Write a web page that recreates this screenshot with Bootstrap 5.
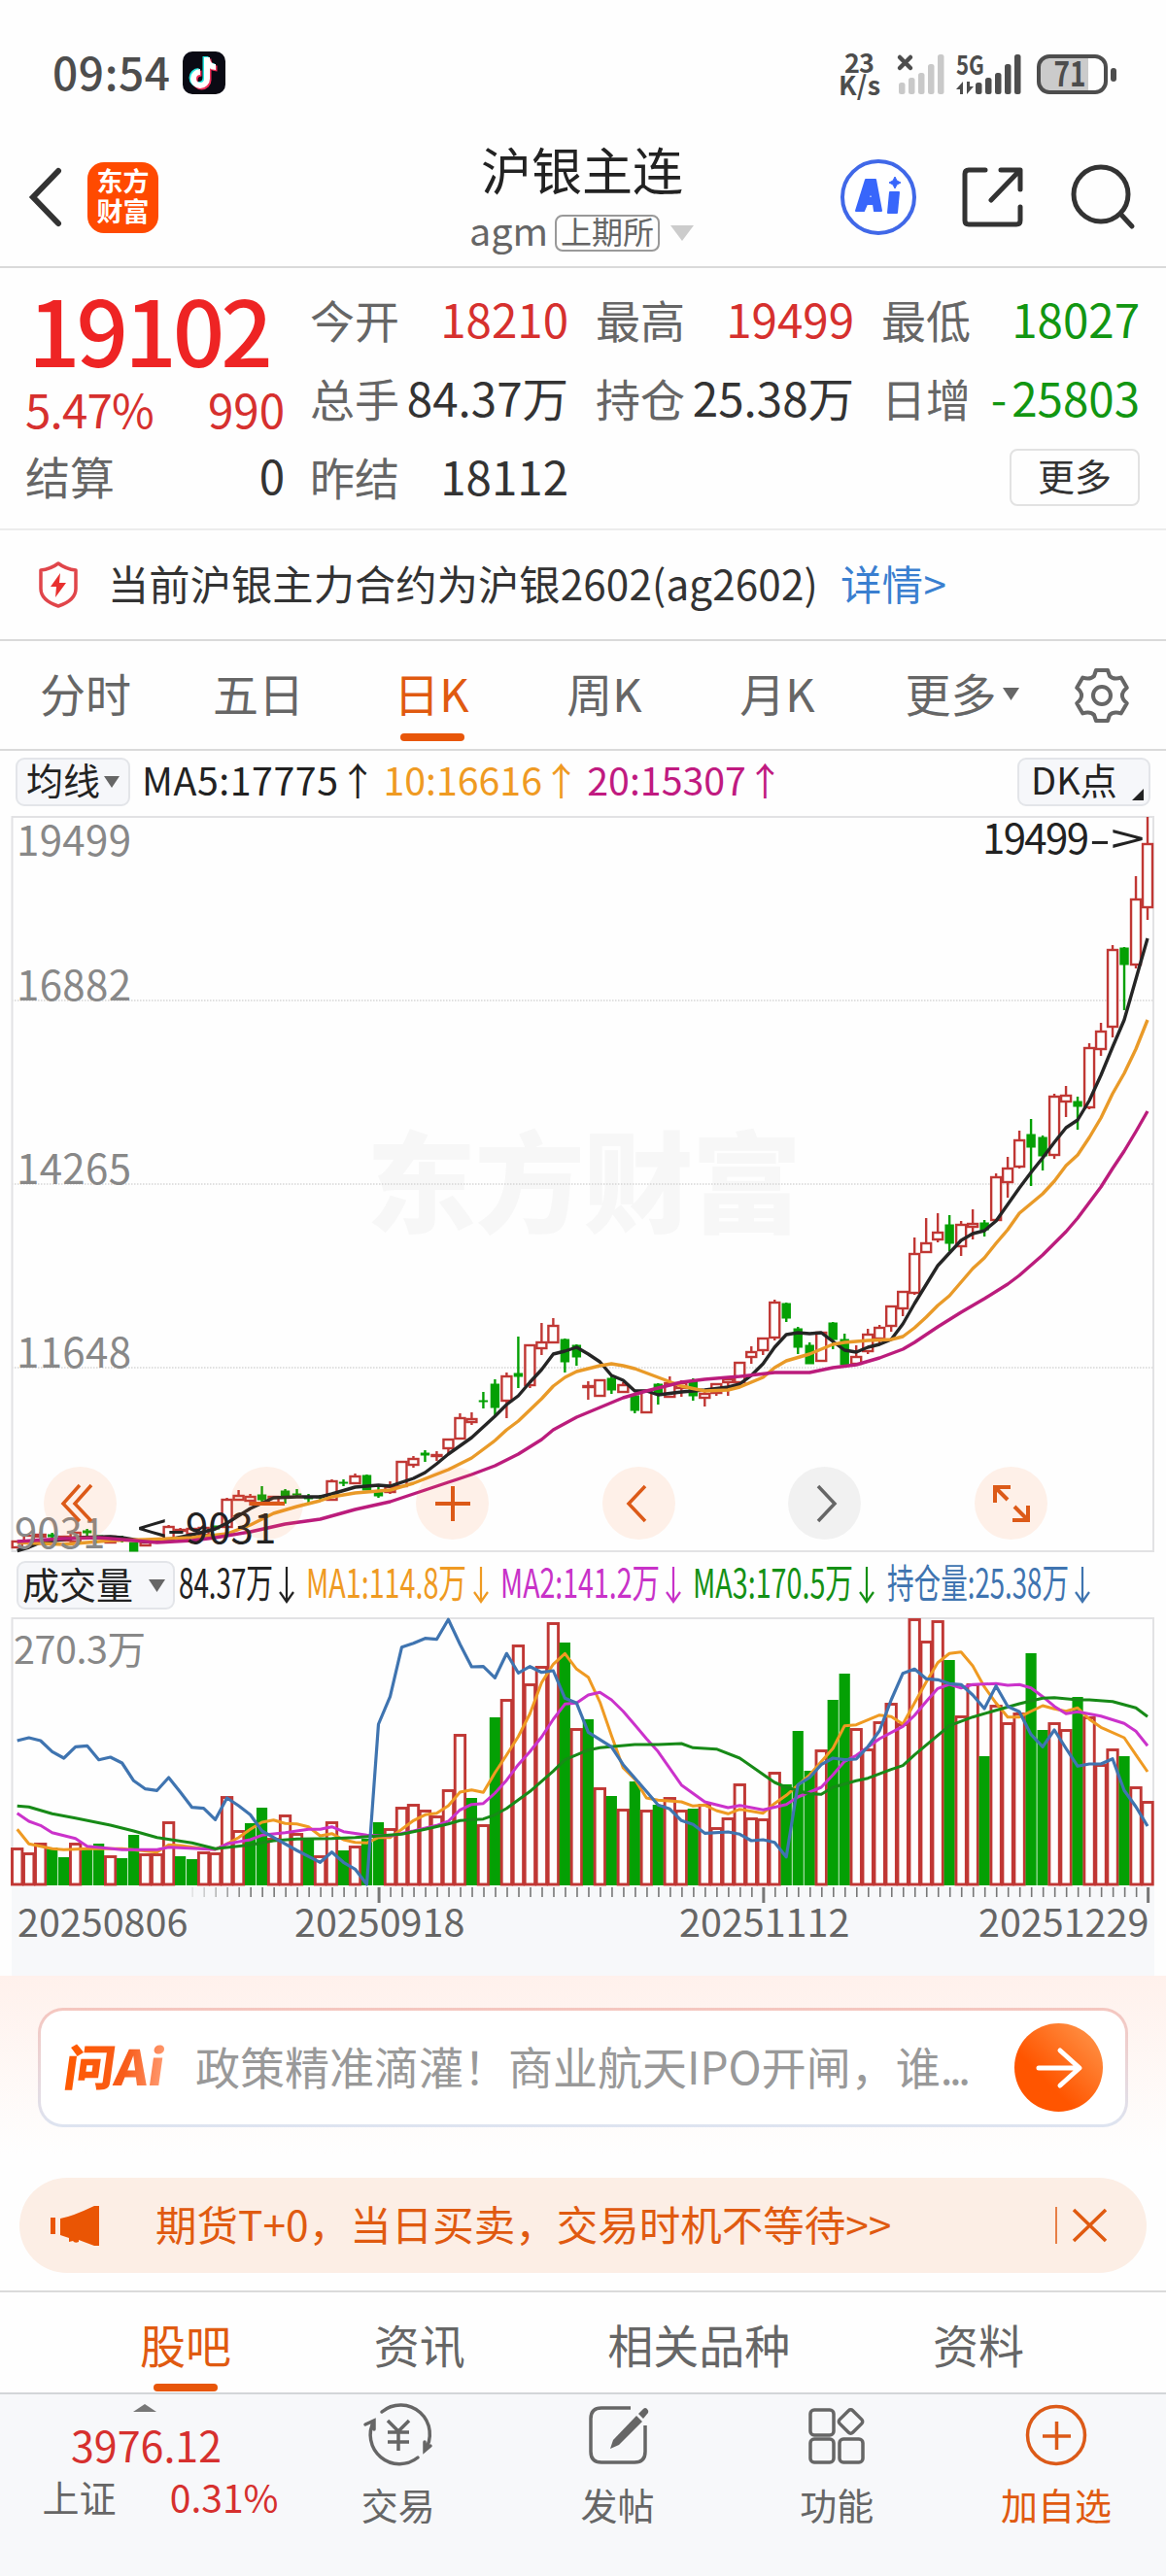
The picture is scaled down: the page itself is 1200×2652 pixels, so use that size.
<!DOCTYPE html>
<html lang="zh-CN">
<head>
<meta charset="utf-8">
<meta name="viewport" content="width=device-width, initial-scale=1">
<title>沪银主连</title>
<link rel="stylesheet" href="https://cdn.jsdelivr.net/npm/bootstrap@5.3.0/dist/css/bootstrap.min.css">
<style>
  body{width:1200px;height:2652px;overflow:hidden;background:#fefefe;color:#333;font-family:"Noto Sans CJK SC",sans-serif;font-size:46px;line-height:1}
  svg{display:block;flex-shrink:0;overflow:visible}
  svg text{font-family:"Noto Sans CJK SC",sans-serif}
  .txt-grey{color:#666}.txt-red{color:#d6302e}.txt-green{color:#129612}.txt-blue{color:#3a7fd0}.txt-orange{color:#e05a10}
  .rule-b{border-bottom:2px solid #dadada}
  .status-bar{height:131px;padding:0 50px 21px 54px;color:#4d4d4d}
  .clock{font-size:46px;font-weight:500;letter-spacing:.6px;line-height:50px;padding-bottom:4px;width:118px}
  .top-bar{height:145px;padding:0 32px 0 30px}
  .top-side{width:370px;height:144px}
  .top-title{font-size:52px;line-height:60px;color:#222;margin-bottom:17px}
  .sub-line{height:38px;font-size:39.5px;color:#666}
  .exch{border:2px solid #999;border-radius:8px;font-size:32px;height:38px;width:108px;line-height:29px;margin-left:7px}
  .app-logo{width:73px;height:73px;border-radius:17px;background:#ff4a00;color:#fff;font-weight:700;font-size:27px;line-height:31px;padding-top:3px;margin-left:27px}
  .quote{height:270px;padding:11px 27px 0 26px;border-bottom:2px solid #ececec}
  .q-left{width:267px}
  .q-price{font-size:94px;height:104px;line-height:100px;color:#ee2424;font-weight:500;letter-spacing:-4px;padding-left:3px}
  .q-row{height:81px}
  .q-cell{width:266px}
  .q-val{font-size:47.5px}
  .dash{letter-spacing:5px}
  .q-more{width:134px;height:59px;border:2px solid #e2e2e2;border-radius:8px;font-size:38px;padding-bottom:4px;margin-top:3px}
  .notice{height:114px;font-size:42.2px;padding:2px 38px 2px}
  .k-tabs{height:113px;font-size:47px;color:#666}
  .k-tab{width:178px;height:100%;padding:0 2px 6px 0;position:relative}
  .bar-under{position:absolute;bottom:8px;left:50%;width:66px;height:8px;margin-left:-33px;border-radius:4px;background:#e8560a}
  .ma-row{height:63px;padding:0 16px;font-size:39.3px;line-height:50px}
  .chip{background:#f6f7fa;border:2px solid #e3e5e9;border-radius:9px;height:50px;font-size:38px;color:#222;line-height:40px}
  .ma-txt{margin-top:-5px;white-space:pre}
  .vol-row{height:56px;padding-left:17px}
  .chart-wrap{position:relative}
  .ctl{position:absolute;top:674px;width:75px;height:75px;background:rgba(255,120,40,.1)}
  .ctl-off{background:rgba(0,0,0,.05)}
  .ask{height:208px;padding:33px 39px 0;background:linear-gradient(#fff1ec,#fefefe 88%)}
  .ask-box{height:123px;border:3px solid transparent;border-radius:26px;background:linear-gradient(#fff,#fff) padding-box,linear-gradient(#f5c6bf,#dde4f1) border-box;padding:0 24px}
  .ask-text{font-size:46px;color:#999;margin-left:29px;padding-bottom:5px;white-space:nowrap}
  .ask-dots{letter-spacing:-3.5px}
  .promo{height:98px;margin:0 20px 18px;border-radius:49px;background:#fceee5;font-size:42.5px;padding:0 39px 0 32px}
  .b-tabs{height:107px;padding:0 146px 0 144px;font-size:47px;color:#666;border-top:2px solid #dadada;border-bottom:2px solid #d3d5d8}
  .b-tab{height:100%;position:relative;padding-top:29px}
  .b-tabs .bar-under{bottom:1px}
  .foot{height:187px;background:#f7f8fa;font-size:38px;color:#666}
  .foot-idx{width:297px}
</style>
<script src="https://cdn.jsdelivr.net/npm/bootstrap@5.3.0/dist/js/bootstrap.bundle.min.js"></script>
</head>
<body>

<div class="status-bar d-flex align-items-end justify-content-between">
  <div class="d-flex align-items-center mb-2">
    <div class="clock">09:54</div>
    <svg class="ms-3" width="44" height="44" viewBox="0 0 44 44"><rect width="44" height="44" rx="10" fill="#0a0a14"/>
      <g fill="none" stroke-width="6"><path d="M24.500 6v22a7 7 0 1 1-7-7M24.500 8c1 5 4 8 9 8" stroke="#25e5e0" transform="translate(-1 -1)"/><path d="M24.500 6v22a7 7 0 1 1-7-7M24.500 8c1 5 4 8 9 8" stroke="#f0305a" transform="translate(2 1.500)"/><path d="M25 6v22a7 7 0 1 1-7-7M25 8c1 5 4 8 9 8" stroke="#fff"/></g></svg>
  </div>
  <svg class="mb-2" width="288" height="52" viewBox="862 50 288 52" fill="#4d4d4d">
    <g font-weight="700" font-size="27"><text x="869" y="75" textLength="31">23</text><text x="863" y="98" textLength="43">K/s</text></g>
    <path d="M926 59l11 11m0-11l-11 11" stroke="#4d4d4d" stroke-width="4.500" stroke-linecap="round"/>
    <g fill="#c9c9c9"><rect x="925" y="85" width="6.500" height="12" rx="2.500"/><rect x="935" y="80" width="6.500" height="17" rx="2.500"/><rect x="945" y="75" width="6.500" height="22" rx="2.500"/><rect x="955" y="66" width="6.500" height="31" rx="2.500"/><rect x="965" y="56" width="6.500" height="41" rx="2.500"/></g>
    <text x="984" y="77" font-weight="700" font-size="27" textLength="29" lengthAdjust="spacingAndGlyphs">5G</text>
    <path d="M984 92l7-8v13h-3v-5zM1002 89l-7 8v-13h3v5z"/>
    <rect x="1004" y="85" width="6.500" height="12" rx="2.500"/><rect x="1014" y="80" width="6.500" height="17" rx="2.500"/><rect x="1024" y="75" width="6.500" height="22" rx="2.500"/><rect x="1034" y="66" width="6.500" height="31" rx="2.500"/><rect x="1044" y="56" width="6.500" height="41" rx="2.500"/>
    <path d="M1120 58H1080q-11 0-11 11v15q0 11 11 11h40z" fill="#cbcbcb"/>
    <rect x="1069" y="58" width="69" height="37" rx="11" fill="none" stroke="#4d4d4d" stroke-width="4"/><rect x="1143" y="70" width="6" height="14" rx="3"/>
    <text x="1101" y="89" font-size="35" font-weight="700" text-anchor="middle" textLength="33" lengthAdjust="spacingAndGlyphs">71</text>
  </svg>
</div>

<header class="top-bar d-flex justify-content-between rule-b">
  <div class="top-side d-flex align-items-center">
    <svg width="33" height="64" viewBox="0 0 33 64"><path d="M30 5L4 32l26 27" fill="none" stroke="#333" stroke-width="6" stroke-linecap="round"/></svg>
    <div class="app-logo text-center">东方<br>财富</div>
  </div>
  <div class="d-flex flex-column align-items-center" style="padding-top:13px">
    <div class="top-title">沪银主连</div>
    <div class="sub-line d-flex align-items-center"><span class="pb-2">agm</span><span class="exch text-center">上期所</span>
      <svg style="margin-left:10px" width="26" height="16"><path d="M1 0h24L13 16z" fill="#ccc"/></svg></div>
  </div>
  <div class="top-side d-flex align-items-center justify-content-end">
    <svg width="78" height="78" viewBox="0 0 78 78"><circle cx="39" cy="39" r="37" fill="#fff" stroke="#4068e8" stroke-width="4"/><g fill="#3866fb" stroke="#3866fb" stroke-width="2" stroke-linejoin="round"><path fill-rule="evenodd" d="M26 21h10l6 32h-7l-1-7h-7l-3 7h-8zM31 33l-2 7h4z"/><path d="M51 34h9l-2 21h-9z"/><path d="M56 18l2 4 4 2-4 2-2 4-2-4-4-2 4-2z" stroke-width="1"/></g></svg>
    <svg style="margin-left:46px" width="65" height="64" viewBox="0 0 65 64" fill="none" stroke="#333" stroke-width="5" stroke-linecap="round" stroke-linejoin="round"><path d="M25 4H8q-4 0-4 4v48q0 4 4 4h49q4 0 4-4V42M41 4h20v20M60 5L31 35"/></svg>
    <svg style="margin-left:48px" width="66" height="66" viewBox="0 0 66 66" fill="none" stroke="#333" stroke-width="5" stroke-linecap="round"><circle cx="31" cy="30" r="28"/><path d="M51 50l12 13"/></svg>
  </div>
</header>

<section class="quote d-flex justify-content-between">
  <div class="q-left">
    <div class="q-price">19102</div>
    <div class="d-flex justify-content-between align-items-center txt-red q-val" style="height:60px"><span style="letter-spacing:-.8px">5.47%</span><span>990</span></div>
    <div class="d-flex justify-content-between align-items-center" style="height:76px"><span class="txt-grey">结算</span><span class="q-val">0</span></div>
  </div>
  <div style="width:854px">
    <div class="q-row d-flex justify-content-between align-items-center">
      <div class="q-cell d-flex justify-content-between align-items-center"><span class="txt-grey">今开</span><span class="q-val txt-red">18210</span></div>
      <div class="q-cell d-flex justify-content-between align-items-center"><span class="txt-grey">最高</span><span class="q-val txt-red">19499</span></div>
      <div class="q-cell d-flex justify-content-between align-items-center"><span class="txt-grey">最低</span><span class="q-val txt-green">18027</span></div>
    </div>
    <div class="q-row d-flex justify-content-between align-items-center">
      <div class="q-cell d-flex justify-content-between align-items-center"><span class="txt-grey">总手</span><span class="q-val">84.37万</span></div>
      <div class="q-cell d-flex justify-content-between align-items-center"><span class="txt-grey">持仓</span><span class="q-val">25.38万</span></div>
      <div class="q-cell d-flex justify-content-between align-items-center"><span class="txt-grey">日增</span><span class="q-val txt-green"><span class="dash">-</span>25803</span></div>
    </div>
    <div class="q-row d-flex justify-content-between align-items-center">
      <div class="q-cell d-flex justify-content-between align-items-center"><span class="txt-grey">昨结</span><span class="q-val">18112</span></div>
      <div class="q-more d-flex align-items-center justify-content-center">更多</div>
    </div>
  </div>
</section>

<section class="notice d-flex align-items-center rule-b">
  <svg width="44" height="50" viewBox="0 0 44 50" style="margin-right:29px"><path d="M22 3q8 6 18 7v19q0 12-18 18Q4 41 4 29V10q10-1 18-7z" fill="none" stroke="#e0454a" stroke-width="3.500" stroke-linejoin="round"/><path d="M24 13l-10 14h6l-1 11 11-15h-7z" fill="#e8302f"/></svg>
  <span class="pb-1" style="letter-spacing:.15px">当前沪银主力合约为沪银2602(ag2602)</span><span class="pb-1 txt-blue" style="margin-left:23px;letter-spacing:.6px">详情&gt;</span>
</section>

<nav class="k-tabs d-flex align-items-center rule-b">
  <div class="k-tab d-flex align-items-center justify-content-center">分时</div>
  <div class="k-tab d-flex align-items-center justify-content-center">五日</div>
  <div class="k-tab d-flex align-items-center justify-content-center txt-orange">日K<span class="bar-under"></span></div>
  <div class="k-tab d-flex align-items-center justify-content-center">周K</div>
  <div class="k-tab d-flex align-items-center justify-content-center">月K</div>
  <div class="k-tab d-flex align-items-center justify-content-center ps-4">更多<svg style="margin:3px 0 0 6px" width="17" height="13"><path d="M0 0h17L8.500 13z" fill="#666"/></svg></div>
  <svg style="margin-left:36px" width="60" height="60" viewBox="-30 -30 60 60" fill="none" stroke="#666" stroke-width="4" stroke-linejoin="round"><path d="M-6-26H6L8-20Q12-16 19.700-18.400L25.800-8Q16 0 25.800 8L19.700 18.400Q12 16 8 20L6 26H-6L-8 20Q-12 16-19.700 18.400L-25.800 8Q-16 0-25.800-8L-19.700-18.400Q-12-16-8-20z"/><circle r="9"/></svg>
</nav>

<div class="ma-row d-flex align-items-center justify-content-between">
  <div class="d-flex align-items-center">
    <div class="chip d-flex align-items-center" style="width:118px;padding:0 8px 0 9px"><span style="margin-top:-5px">均线</span><svg class="ms-1" width="16" height="12"><path d="M0 0h16L8 12z" fill="#666"/></svg></div>
    <span class="ma-txt" style="margin-left:12px;color:#222;letter-spacing:.55px">MA5:17775↑</span>
    <span class="ma-txt" style="margin-left:6px;color:#ef9a22">10:16616↑</span>
    <span class="ma-txt" style="margin-left:7px;color:#c01a80">20:15307↑</span>
  </div>
  <div class="chip d-flex justify-content-between align-items-center" style="width:137px;padding:0 5px 0 12px"><span style="margin-top:-5px">DK点</span><svg width="12" height="12" class="align-self-end mb-1"><path d="M12 0v12H0z" fill="#222"/></svg></div>
</div>

<div class="chart-wrap">
  <svg id="kline" width="1200" height="768" viewBox="0 836 1200 768"></svg>
  <button class="ctl btn p-0 border-0 rounded-circle" style="left:45px"><svg width="75" height="75" viewBox="0 0 75 75" fill="none" stroke="#dc5a18" stroke-width="3.500"><path d="M37 19L20 38l17 18M49 19L32 38l17 18"/></svg></button>
  <button class="ctl btn p-0 border-0 rounded-circle" style="left:237px"><svg width="75" height="75" viewBox="0 0 75 75"><path d="M20 38h36" stroke="#dc5a18" stroke-width="4"/></svg></button>
  <button class="ctl btn p-0 border-0 rounded-circle" style="left:428px"><svg width="75" height="75" viewBox="0 0 75 75"><path d="M20 38h36M38 20v36" stroke="#dc5a18" stroke-width="4"/></svg></button>
  <button class="ctl btn p-0 border-0 rounded-circle" style="left:620px"><svg width="75" height="75" viewBox="0 0 75 75"><path d="M44 20L27 38l17 18" fill="none" stroke="#dc5a18" stroke-width="3.500"/></svg></button>
  <button class="ctl ctl-off btn p-0 border-0 rounded-circle" style="left:811px"><svg width="75" height="75" viewBox="0 0 75 75"><path d="M31 20l17 18-17 18" fill="none" stroke="#666" stroke-width="3.500"/></svg></button>
  <button class="ctl btn p-0 border-0 rounded-circle" style="left:1003px"><svg width="75" height="75" viewBox="0 0 75 75"><path d="M21 37V21h16M22 22l12 12M55 40v15H39M54 54L41 41" fill="none" stroke="#dc5a18" stroke-width="4"/></svg></button>
</div>

<div class="vol-row d-flex align-items-center">
  <div class="chip d-flex align-items-center justify-content-between" style="width:163px;padding:0 8px 0 4px"><span style="margin-top:-5px">成交量</span><svg width="17" height="13"><path d="M0 0h17L8.500 13z" fill="#666"/></svg></div>
  <svg id="vlegend" width="1020" height="56" viewBox="180 1604 1020 56"></svg>
</div>
<svg id="volume" width="1200" height="374" viewBox="0 1660 1200 374"></svg>

<section class="ask">
  <div class="ask-box d-flex align-items-center">
    <svg width="106" height="50" viewBox="0 0 106 50"><defs><linearGradient id="lg"><stop offset="0" stop-color="#ff5a00"/><stop offset=".6" stop-color="#f85c1a"/><stop offset="1" stop-color="#ff9a70"/></linearGradient></defs>
      <g transform="skewX(-8)"><text x="4" y="43" font-size="50" font-weight="900" fill="url(#lg)" textLength="103" lengthAdjust="spacingAndGlyphs">问Ai</text></g></svg>
    <span class="ask-text">政策精准滴灌！商业航天IPO开闸，谁<span class="ask-dots">...</span></span>
    <svg class="ms-auto" width="91" height="91" viewBox="0 0 91 91"><defs><linearGradient id="og" x1="0" y1="1" x2="1" y2="0"><stop offset=".35" stop-color="#ff5500"/><stop offset="1" stop-color="#ff9a50"/></linearGradient></defs><circle cx="46.500" cy="45.500" r="45.500" fill="url(#og)"/><path d="M26 46h41M48 28l20 18-20 18" fill="none" stroke="#fff" stroke-width="5" stroke-linecap="round" stroke-linejoin="round"/></svg>
  </div>
</section>

<div class="promo d-flex align-items-center txt-orange">
  <svg width="50" height="42" viewBox="0 0 50 42" fill="#ea5504"><path d="M0 13h5v17H0zM10 14q12-2 35-13h5v41h-5l-16-6v2q-4 2-6-1l-4 1v-4l-9-3z"/></svg>
  <span style="margin-left:58px;padding-bottom:4px">期货T+0，当日买卖，交易时机不等待&gt;&gt;</span>
  <svg class="ms-auto" width="56" height="40" viewBox="0 0 56 40" fill="none" stroke="#e05a10"><path d="M2 1v38" stroke-width="1.500"/><path d="M20 4l33 32M53 4L20 36" stroke-width="3.500"/></svg>
</div>

<nav class="b-tabs d-flex justify-content-between">
  <div class="b-tab txt-orange">股吧<span class="bar-under"></span></div>
  <div class="b-tab">资讯</div>
  <div class="b-tab">相关品种</div>
  <div class="b-tab">资料</div>
</nav>

<footer class="foot d-flex">
  <div class="foot-idx d-flex flex-column align-items-center">
    <svg style="margin-top:10px" width="24" height="8"><path d="M0 8L12 0l12 8z" fill="#777"/></svg>
    <div class="txt-red" style="font-size:43px;line-height:46px;margin-top:10px;padding-left:4px">3976.12</div>
    <div class="d-flex justify-content-between align-items-center" style="width:243px;margin:8px 0 0 33px;height:46px"><span>上证</span><span class="txt-red" style="font-size:39px">0.31%</span></div>
  </div>
  <div class="flex-fill d-flex flex-column align-items-center" style="width:0">
    <svg style="margin-top:9px" width="74" height="66" viewBox="-37 -33 74 66" fill="none" stroke="#666" stroke-width="3.500" stroke-linecap="round"><path d="M-17-24A30 30 0 0 1 27 16M33 11l-6 5 0-9M20 23A30 30 0 0 1-25-15M-34-11l9-4 0 9"/><path d="M-11-15L0-4l11-11M0-4v20M-11-3h22M-11 7h22" stroke-linecap="butt"/></svg>
    <span style="margin-top:19px">交易</span></div>
  <div class="flex-fill d-flex flex-column align-items-center" style="width:0">
    <svg style="margin-top:9px" width="66" height="66" viewBox="-33 -33 66 66" fill="none" stroke="#666" stroke-width="3.500"><path d="M13-28h-30q-11 0-11 11V17q0 11 11 11H17q11 0 11-11V-10"/><path d="M-8 14l3-9L19-20l6 6L1 10z" fill="#666" stroke="none"/><path d="M21-22l5-5q2-2 4 0t1 4l-5 6z" fill="#666" stroke="none"/></svg>
    <span style="margin-top:19px">发帖</span></div>
  <div class="flex-fill d-flex flex-column align-items-center" style="width:0">
    <svg style="margin-top:9px" width="66" height="66" viewBox="-33 -33 66 66" fill="none" stroke="#666" stroke-width="3.500" stroke-linejoin="round"><rect x="-27" y="-26" width="24" height="26" rx="4"/><rect x="-27" y="4" width="24" height="24" rx="4"/><rect x="3" y="4" width="24" height="24" rx="4"/><rect x="5" y="-23.500" width="19" height="19" rx="3" transform="rotate(45 14.500 -14)"/></svg>
    <span style="margin-top:19px">功能</span></div>
  <div class="flex-fill d-flex flex-column align-items-center txt-orange" style="width:0">
    <svg style="margin-top:9px" width="66" height="66" viewBox="-33 -33 66 66" fill="none" stroke="#dc5a18" stroke-width="3.500"><circle r="29.500"/><path d="M-14 1h29M.500-14v29"/></svg>
    <span style="margin-top:19px">加自选</span></div>
</footer>

<script>
const X0 = 17.7, STEP = 11.993, RED = '#c03734', GREEN = '#04a004';
const cx = i => X0 + STEP * i;
const line = (pts, color, w, f) => `<polyline fill="none" stroke="${color}" stroke-width="${w}" stroke-linejoin="round" points="${pts.trim().split(/\s+/).map(p => { const [i, y] = p.split(':').map(Number); return cx(i).toFixed(1) + ',' + f(y).toFixed(1); }).join(' ')}"/>`;

/* candles: direction, body top, body bottom, high, low (chart pixels) */
const candles = `r1587,1593 r1581,1587 r1580,1582,1577,1585 g1580,1582,1578,1586 r1582,1586 r1578,1587 g1576,1578,1574,1582 g1581,1584 r1582,1588 g1583,1584,1581,1588
g1588,1597 r1588,1591 g1586,1588 r1572,1585,1570,1585 r1575,1576,1573,1578 r1574,1579 r1573,1580,1571,1580 g1571,1574 r1544,1572,1542,1572 r1540,1544,1534,1544
r1541,1545,1538,1550 g1539,1544,1530,1547 r1541,1547,1541,1549 g1535,1541,1533,1548 g1538,1539,1533,1540 g1542,1543,1538,1547 g1541,1542,1539,1544 r1525,1544,1523,1544 g1526,1527,1523,1530 r1520,1527,1517,1528
g1519,1534,1518,1534 g1535,1540,1528,1542 r1531,1536,1525,1538 r1505,1530,1504,1530 r1502,1508,1499,1511 g1496,1498,1493,1505 r1498,1499,1494,1504 r1482,1491,1482,1496 r1460,1481,1455,1481 r1461,1464,1454,1467
g1442,1443,1433,1450 g1425,1449,1420,1457 r1417,1442,1413,1460 g1414,1417,1376,1429 r1385,1426,1385,1429 r1382,1388,1362,1395 r1365,1382,1357,1382 g1379,1402,1378,1413 g1385,1397,1384,1406 r1427,1428,1422,1441
r1421,1437 g1419,1431,1415,1435 r1426,1433,1423,1433 g1437,1452,1436,1455 r1432,1454 g1425,1435,1424,1446 r1424,1438,1417,1438 r1424,1429,1421,1438 g1422,1437,1419,1442 r1435,1439,1433,1448
r1425,1434,1424,1437 r1420,1423,1419,1437 r1403,1423 r1392,1397,1386,1404 r1378,1390,1378,1395 r1341,1377,1338,1380 g1342,1357,1341,1361 g1368,1387,1366,1394 g1385,1404,1382,1404 r1372,1401
g1362,1379,1361,1389 g1379,1405,1373,1405 r1397,1404,1385,1404 r1374,1391,1368,1394 r1367,1378,1364,1383 r1345,1365,1345,1371 r1330,1347,1329,1355 r1291,1331,1274,1333 r1280,1289,1254,1289 r1269,1276,1249,1279
g1261,1280,1251,1288 r1261,1283,1257,1293 r1260,1263,1245,1276 g1259,1266,1256,1273 r1212,1256,1208,1256 r1203,1217,1191,1233 r1174,1201,1164,1203 g1168,1181,1152,1221 g1171,1190,1169,1205 r1129,1189,1126,1193
r1128,1134,1118,1150 g1134,1139,1129,1163 r1079,1140,1074,1142 r1062,1080,1053,1087 r978,1057,973,1068 g976,993,975,1040 r926,993,902,997 r869,934,841,947`.split(/\s+/);

const ma5 = `0:1596.5 1:1593 2:1588 5:1583 8:1582 9:1583 11:1587 13:1585 15:1580 17:1574 18:1568 20:1553 22:1542 24:1541 26:1541 27:1538 29:1531 31:1529 32:1530 34:1522 35:1516 36:1507 37:1497 39:1480 41:1458 42:1446 43:1437 44:1423 45:1410 46:1394 47:1391 48:1387 49:1394 50:1402 51:1416 52:1421 53:1432 54:1432 55:1436 57:1433 59:1431 61:1428 62:1425 63:1416 64:1404 65:1387 66:1374 67:1372 68:1373 69:1372 70:1381 71:1390 72:1392 73:1387 74:1384 75:1379 76:1363 77:1342 79:1303 81:1277 82:1270 83:1267 84:1257 85:1240 86:1223 87:1207 88:1192 89:1176 90:1161 91:1153 92:1133 93:1107 94:1078 95:1050 96:1008 97:966`;
const ma10 = `0:1588 4:1590 8:1586 11:1585 15:1583 18:1579 20:1570 22:1558 24:1551 26:1545 27:1541 29:1537 32:1534 34:1527 37:1513 39:1501 41:1483 42:1472 43:1463 45:1440 46:1427 47:1418 48:1412 49:1409 50:1406 51:1404 52:1406 53:1409 55:1418 57:1427 59:1432 61:1431 62:1428 64:1418 65:1408 66:1401 68:1394 70:1384 71:1382 73:1380 75:1379 76:1376 77:1367 78:1356 79:1344 80:1334 82:1306 83:1295 84:1280 85:1266 86:1249 87:1239 88:1229 89:1216 90:1200 91:1189 92:1171 93:1151 94:1126 95:1105 96:1080 97:1050`;
const ma20 = `0:1587 4:1584 7:1583 9:1585 12:1588 15:1586 17:1583 20:1577 23:1569 26:1564 29:1554 32:1546 35:1534 37:1526 39:1518 41:1509 43:1497 45:1482 46:1472 48:1459 50:1449 52:1439 54:1432 57:1423 59:1420 62:1417 65:1413 68:1413 70:1408 72:1405 74:1398 76:1389 77:1382 79:1366 81:1351 83:1337 85:1322 86:1313 88:1292 90:1268 91:1254 93:1222 94:1203 95:1185 96:1165 97:1144`;

let k = `<text x="377" y="1260" font-size="113" font-weight="900" fill="#f7f7f7" textLength="448">东方财富</text>
<g stroke="#d6d6d6" stroke-width="1.3" stroke-dasharray="1.5 1.5"><path d="M12 1030H1187M12 1219H1187M12 1408H1187"/></g>
<rect x="12.500" y="841" width="1174.500" height="756" fill="none" stroke="#e2e2e4" stroke-width="2"/>`;
candles.forEach((c, i) => {
  const up = c[0] === 'r', [t, b, h = t, l = b] = c.slice(1).split(',').map(Number), x = cx(i), col = up ? RED : GREEN;
  k += `<path d="M${x} ${h}V${t}M${x} ${b}V${l}" stroke="${col}" stroke-width="2.400"/>`;
  k += up ? `<rect x="${x - 5}" y="${t}" width="10" height="${b - t}" fill="#fefefe" stroke="${RED}" stroke-width="2.400"/>`
          : `<rect x="${x - 4.7}" y="${t - .5}" width="9.400" height="${b - t + 1}" fill="${GREEN}"/>`;
});
const same = y => y;
k += line(ma5, '#252525', 3.4, same) + line(ma10, '#e99a28', 3.4, same) + line(ma20, '#bb1c7c', 3.4, same);
k += `<g font-size="42" fill="#888"><text x="17" y="881" textLength="118">19499</text><text x="17" y="1030" textLength="118">16882</text><text x="17" y="1219" textLength="118">14265</text><text x="17" y="1408" textLength="118">11648</text><text x="15" y="1594">9031</text></g>
<g font-size="42" fill="#222"><text x="1011" y="879" textLength="110">19499</text><text x="1121" y="879" textLength="57" lengthAdjust="spacingAndGlyphs">-&gt;</text><text x="141" y="1589" textLength="50" lengthAdjust="spacingAndGlyphs">&lt;-</text><text x="191" y="1589">9031</text></g>`;
document.getElementById('kline').innerHTML = k;

/* volume legend */
const legend = [['84.37万', 184, 97, 295, '#222'], ['MA1:114.8万', 315, 165, 495, '#ef9a22'], ['MA2:141.2万', 515, 164, 693, '#c832c8'], ['MA3:170.5万', 713, 165, 892, '#149014'], ['持仓量:25.38万', 913, 187, 1114, '#3f74b0']];
document.getElementById('vlegend').innerHTML = legend.map(([t, x, w, a, c]) =>
  `<text x="${x}" y="1645" font-size="41" fill="${c}" textLength="${w}" lengthAdjust="spacingAndGlyphs">${t}</text><path d="M${a} 1613v36m-7-10l7 10 7-10" fill="none" stroke="${c}" stroke-width="2.200"/>`).join('');

/* volume bars: direction and top edge */
const vols = `r1903 r1908 r1898 g1902 g1912 r1898 g1904 g1898 r1911 g1913 g1889 r1909 r1909 r1876 g1911 g1914 r1907 r1908 r1850 r1885 g1877 g1861 r1893 r1869 r1888 g1892 r1911 r1876 g1905 r1901 g1893 g1876 r1883 r1861 r1858 r1864 r1870 r1843 r1786 g1851 r1879 g1768 r1750 r1694 r1734 r1716 r1671 g1691 r1780 g1770 r1841 g1849 r1863 g1834 r1864 g1858 r1851 r1864 g1862 r1858 r1882 r1872 r1837 r1872 r1873 r1825 g1837 g1782 g1823 r1802 g1750 g1723 r1780 r1801 r1773 r1754 r1775 r1667 r1690 r1669 g1709 r1767 r1734 g1808 r1756 r1774 r1764 g1702 g1781 r1774 r1781 g1747 r1768 r1817 r1801 g1808 r1840 r1855`.split(' ');
const third = y => 1590 + y / 3;
const v1 = `0:880 1:925 3:940 4:943 6:940 9:940 12:950 13:928 14:930 16:940 17:942 18:925 19:905 20:880 21:858 22:851 23:862 24:863 25:872 26:900 27:893 28:912 29:920 30:922 31:905 32:905 33:880 34:853 35:835 36:830 37:807 38:765 39:758 40:766 41:705 42:650 43:593 44:523 45:427 46:370 47:337 48:385 49:410 50:487 51:590 52:690 53:725 54:783 55:790 57:795 58:808 59:805 60:822 61:832 62:818 64:830 65:800 66:775 68:712 70:630 71:560 72:557 74:527 75:532 76:555 77:490 78:425 79:365 80:337 81:332 82:375 83:440 84:490 85:533 86:533 88:498 89:508 90:515 91:505 92:540 93:565 95:597 96:650 97:702`;
const v2 = `0:830 1:855 2:868 3:890 5:908 6:932 9:943 12:943 13:935 17:942 18:925 20:912 21:898 23:890 25:880 26:880 27:872 28:887 30:898 32:900 34:885 36:868 37:855 38:820 39:803 40:800 41:768 42:728 43:680 44:640 45:595 46:540 47:493 48:490 49:465 50:457 51:480 52:515 53:557 54:600 55:640 57:743 59:795 61:813 62:806 64:820 66:803 67:780 69:750 70:712 71:670 72:652 74:600 76:562 77:528 78:485 79:445 80:432 81:443 82:433 84:430 85:435 86:433 87:443 88:470 89:500 90:523 91:517 93:530 95:553 96:577 97:622`;
const v3 = `0:808 1:811 3:832 5:845 8:867 10:885 12:905 15:922 17:940 20:928 22:915 24:910 27:908 29:905 31:900 33:895 35:880 37:863 38:853 40:848 41:835 42:815 44:763 46:700 47:665 49:635 50:628 53:618 55:618 57:615 58:628 60:632 62:660 64:710 65:735 66:750 68:770 69:772 70:750 72:730 73:722 75:695 76:683 77:650 79:590 80:560 82:533 84:512 86:492 88:475 89:473 91:480 92:480 94:485 96:505 97:532`;
const oi = `0:606 1:597 2:606 3:640 4:660 5:625 6:622 7:665 8:657 9:675 10:730 11:755 12:760 13:720 14:765 15:812 16:815 17:850 18:783 19:807 20:835 21:885 22:905 24:945 26:982 27:950 28:982 29:1003 30:1050 31:555 32:470 33:317 34:305 35:290 36:293 37:232 38:308 39:378 40:377 41:412 42:337 43:397 44:377 45:395 46:390 47:475 48:490 49:580 51:625 52:680 54:763 55:805 56:817 57:853 58:865 59:892 61:888 62:895 63:915 64:912 65:920 66:965 67:742 68:720 69:680 70:660 71:665 72:663 73:625 74:575 75:480 76:398 77:385 78:415 79:418 80:430 81:433 82:465 83:507 84:437 85:500 86:517 87:587 88:625 89:573 90:630 91:685 92:678 93:678 94:662 95:760 96:810 97:870`;

let v = `<rect x="12" y="1942" width="1176" height="92" fill="#f7f8fa"/><path d="M12.500 1941V1666H1187V1941" fill="none" stroke="#e2e2e4" stroke-width="2"/>
<text x="14" y="1713" font-size="39.500" fill="#888" textLength="136">270.3万</text>`;
vols.forEach((s, i) => {
  const y = +s.slice(1), x = cx(i);
  v += s[0] === 'r' ? `<rect x="${x - 5.2}" y="${y + .5}" width="10.400" height="${1939.500 - y}" fill="#fefefe" stroke="${RED}" stroke-width="2.900"/>`
                    : `<rect x="${x - 5.6}" y="${y}" width="11.200" height="${1941 - y}" fill="${GREEN}"/>`;
});
for (let i = 15; i < 98; i++) {
  const big = i === 31 || i === 64 || i === 97;
  v += `<path d="M${cx(i) + .6} 1943v${big ? 16 : 10}" stroke="#777" stroke-width="${big ? 3 : 1.600}" opacity="${i < 20 ? (i - 14) / 6 : 1}"/>`;
}
v += line(v1, '#ef9a22', 3, third) + line(v2, '#cb32cb', 3, third) + line(v3, '#178a17', 3, third) + line(oi, '#3f74b0', 3.2, third);
v += `<g font-size="39.500" fill="#666"><text x="18" y="1994">20250806</text><text x="303" y="1994">20250918</text><text x="699" y="1994">20251112</text><text x="1007" y="1994">20251229</text></g>`;
document.getElementById('volume').innerHTML = v;
</script>
</body>
</html>
